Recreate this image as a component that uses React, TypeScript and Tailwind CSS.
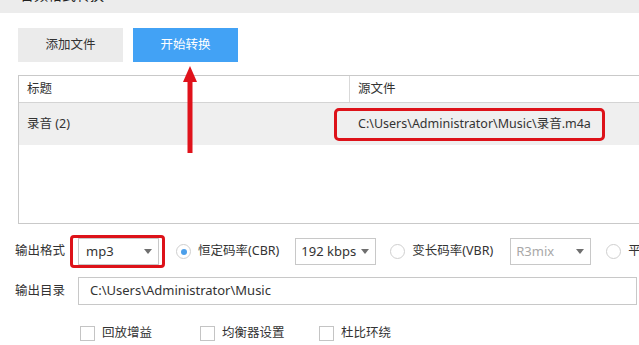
import React from "react";

const font = { fontFamily: '"Noto Sans", "Noto Sans CJK SC", sans-serif' };

function Caret() {
  return (
    <svg width="8" height="5" viewBox="0 0 8 5" className="shrink-0">
      <path d="M0 0h8L4 5z" fill="#6f6f6f" />
    </svg>
  );
}

function Select({ value, muted, pad }: { value: string; muted?: boolean; pad: string }) {
  return (
    <div
      className={`flex h-[27px] w-[81px] items-center justify-between border border-[#c8c8c8] bg-white pr-[6px] ${pad} ${
        muted ? "text-[#a8a8a8]" : "text-[#333]"
      }`}
    >
      <span className="whitespace-nowrap text-[13px]">{value}</span>
      <Caret />
    </div>
  );
}

function Radio({ checked, label }: { checked?: boolean; label: string }) {
  return (
    <div className="flex items-center gap-[7px]">
      <span className="flex h-[15px] w-[15px] shrink-0 items-center justify-center rounded-full border border-[#cfcfcf] bg-white">
        {checked && <span className="h-[6px] w-[6px] rounded-full bg-[#4c9fea]" />}
      </span>
      <span className="whitespace-nowrap text-[12.5px] text-[#333]">{label}</span>
    </div>
  );
}

function Check({ label }: { label: string }) {
  return (
    <div className="flex items-center gap-[7px]">
      <span className="h-[15px] w-[15px] shrink-0 border border-[#c4c4c4] bg-white" />
      <span className="whitespace-nowrap text-[12.5px] text-[#333]">{label}</span>
    </div>
  );
}

export default function App() {
  return (
    <div className="relative h-[345px] w-[639px] overflow-hidden bg-white" style={font}>
      {/* window title strip, cut off at the top */}
      <div className="h-[13px] overflow-hidden bg-[#ececec]">
        <div className="-mt-[16px] ml-[20px] text-[14px] text-[#222]">音频格式转换</div>
      </div>

      {/* action buttons */}
      <div className="flex gap-[10px] pl-[18px] pt-[15px]">
        <button className="flex h-[34px] w-[105px] items-center justify-center bg-[#ebebeb] text-[12.5px] text-[#333]">
          添加文件
        </button>
        <button className="flex h-[34px] w-[105px] items-center justify-center bg-[#42a2f5] text-[12.5px] text-white">
          开始转换
        </button>
      </div>

      {/* file list */}
      <div className="ml-[18px] mt-[13px] h-[149px] w-[640px] border-y border-l border-[#c9c9c9] text-[12.5px] text-[#333]">
        <div className="flex h-[27px] items-center border-b border-[#d4d4d4]">
          <div className="flex h-full w-[331px] items-center border-r border-[#d9d9d9] pl-[8px]">标题</div>
          <div className="pl-[8px]">源文件</div>
        </div>
        <div className="flex h-[42px] items-center bg-[#efefef]">
          <div className="w-[315px] shrink-0 pl-[8px]">录音 (2)</div>
          <div className="flex h-[33px] w-[271px] shrink-0 items-center whitespace-nowrap rounded-[5px] border-[3px] border-[#dd1219] pl-[21px] text-[12.5px]">
            C:\Users\Administrator\Music\录音.m4a
          </div>
        </div>
      </div>

      {/* options */}
      <div className="mt-[14px] flex h-[27px] items-center pl-[15px] [&>*]:shrink-0">
        <span className="w-[63px] whitespace-nowrap text-[12.5px] text-[#333]">输出格式</span>
        <div className="relative">
          <Select value="mp3" pad="pl-[7px]" />
          <span className="absolute -bottom-[3px] -left-[8px] -right-[6px] -top-[3px] rounded-[4px] border-[3px] border-[#dd1219]" />
        </div>
        <div className="ml-[17px]">
          <Radio checked label="恒定码率(CBR)" />
        </div>
        <div className="ml-[16px]">
          <Select value="192 kbps" pad="pl-[5px]" />
        </div>
        <div className="ml-[14px]">
          <Radio label="变长码率(VBR)" />
        </div>
        <div className="ml-[17px]">
          <Select value="R3mix" muted pad="pl-[5px]" />
        </div>
        <div className="ml-[15px]">
          <Radio label="平均码率(ABR)" />
        </div>
      </div>

      <div className="mt-[12px] flex h-[28px] items-center pl-[15px] [&>*]:shrink-0">
        <span className="w-[63px] whitespace-nowrap text-[12.5px] text-[#333]">输出目录</span>
        <div className="flex h-[28px] w-[559px] items-center border border-[#c8c8c8] pl-[11px] text-[13px] text-[#333]">
          C:\Users\Administrator\Music
        </div>
      </div>

      <div className="mt-[19px] flex items-center pl-[80px]">
        <div className="w-[120px]">
          <Check label="回放增益" />
        </div>
        <div className="w-[119px]">
          <Check label="均衡器设置" />
        </div>
        <Check label="杜比环绕" />
      </div>

      {/* annotation arrow */}
      <svg className="absolute left-[182px] top-[66px]" width="16" height="88" viewBox="0 0 16 88">
        <path d="M8 0L15 16H10.5V87H5.5V16H1Z" fill="#e0121b" />
      </svg>
    </div>
  );
}
